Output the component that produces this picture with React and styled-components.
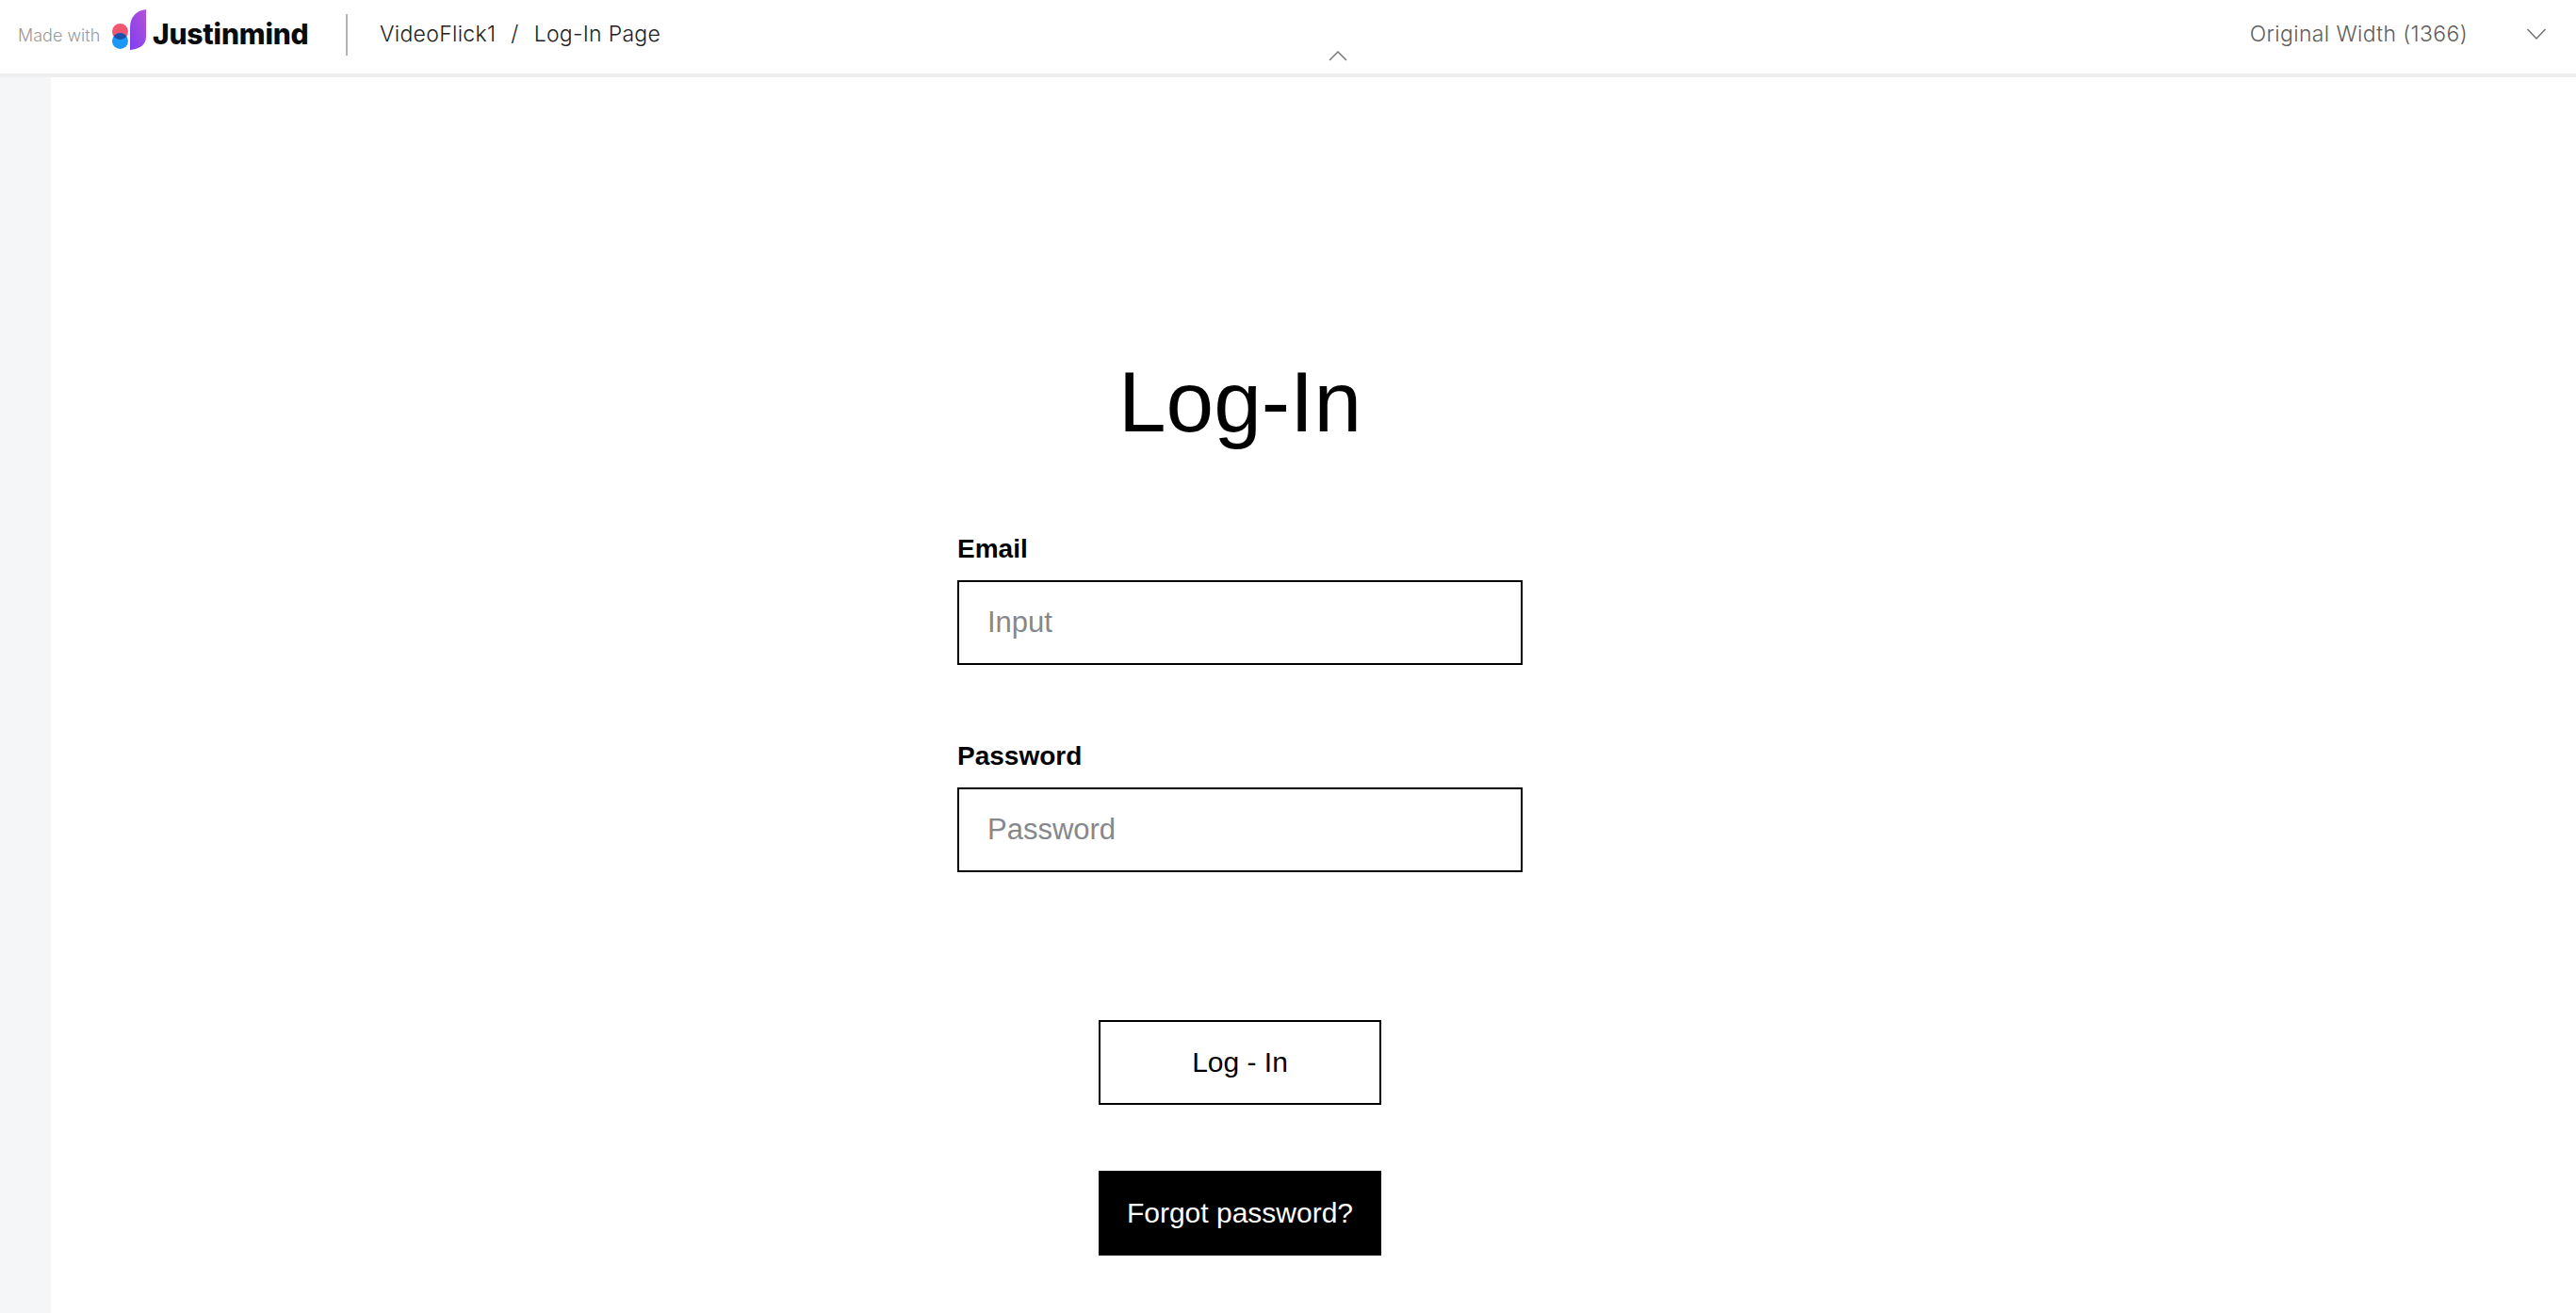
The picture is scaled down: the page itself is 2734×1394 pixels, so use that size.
import React from "react";
import styled, { createGlobalStyle } from "styled-components";

const Global = createGlobalStyle`
  html, body { margin: 0; padding: 0; background: #fff; }
  body { font-family: "Liberation Sans", Arial, sans-serif; overflow: hidden; }
  * { box-sizing: border-box; }
`;

const Page = styled.div`
  width: 2734px;
  height: 1394px;
  display: flex;
  flex-direction: column;
  overflow: hidden;
`;

const TopBar = styled.header`
  position: relative;
  flex: 0 0 82px;
  display: flex;
  align-items: flex-start;
  padding: 0 31px 0 19px;
  background: #fff;
  border-bottom: 4px solid #eeeeee;
  font-family: Inter, "Noto Sans", sans-serif;
`;

const MadeWith = styled.span`
  margin-top: 28px;
  width: 99px;
  font-size: 18px;
  line-height: 20px;
  font-weight: 300;
  color: #999;
  white-space: nowrap;
`;

const LogoMark = styled.svg`
  margin-top: 9px;
  width: 38px;
  height: 44px;
  flex: none;
`;

const LogoWord = styled.span`
  margin: 18px 0 0 6px;
  width: 172px;
  font-size: 30px;
  line-height: 36px;
  font-weight: 800;
  letter-spacing: -0.2px;
  color: #0b0b0b;
  white-space: nowrap;
`;

const Divider = styled.div`
  margin: 15px 34px 0 33px;
  width: 2px;
  height: 44px;
  flex: none;
  background: #b4b4b4;
`;

const Crumbs = styled.nav`
  margin-top: 21px;
  display: flex;
  gap: 16px;
  font-size: 23px;
  line-height: 30px;
  font-weight: 300;
  letter-spacing: 0.3px;
  color: #222;
  white-space: nowrap;
`;

const WidthSelect = styled.div`
  margin-left: auto;
  margin-top: 21px;
  display: flex;
  align-items: center;
  gap: 62px;
  font-size: 23px;
  line-height: 30px;
  font-weight: 300;
  letter-spacing: 0.35px;
  color: #5e5e5e;
  white-space: nowrap;
`;

const CollapseToggle = styled.svg`
  position: absolute;
  left: 1408px;
  top: 52px;
  width: 24px;
  height: 14px;
`;

const Body = styled.div`
  flex: 1;
  display: flex;
  min-height: 0;
`;

const Rail = styled.aside`
  flex: 0 0 54px;
  background: #f5f6f8;
`;

const Main = styled.main`
  flex: 1;
  background: #fff;
  padding-left: 962px;
`;

const Form = styled.form`
  width: 600px;
  display: flex;
  flex-direction: column;
  align-items: stretch;
`;

const Title = styled.h1`
  margin: 293px 0 0;
  font-size: 91px;
  line-height: 104px;
  font-weight: 400;
  color: #000;
  text-align: center;
`;

const Field = styled.label`
  display: flex;
  flex-direction: column;
  gap: 17px;
  margin-top: ${(p) => p.$top}px;
`;

const FieldLabel = styled.span`
  font-size: 28px;
  line-height: 32px;
  font-weight: 700;
  color: #000;
`;

const TextInput = styled.input`
  width: 600px;
  height: 90px;
  padding: 0 30px;
  border: 2px solid #000;
  border-radius: 0;
  outline: none;
  background: #fff;
  font-family: inherit;
  font-size: 31px;
  color: #000;
  &::placeholder { color: #85888c; opacity: 1; }
`;

const Actions = styled.div`
  margin-top: 157px;
  display: flex;
  flex-direction: column;
  align-items: center;
  gap: 70px;
`;

const ActionButton = styled.button`
  width: 300px;
  height: 90px;
  padding: 0;
  border: 2px solid #000;
  border-radius: 0;
  background: ${(p) => (p.$solid ? "#000" : "#fff")};
  color: ${(p) => (p.$solid ? "#fff" : "#000")};
  font-family: inherit;
  font-size: 30px;
`;

export default function App() {
  return (
    <Page>
      <Global />
      <TopBar>
        <MadeWith>Made with</MadeWith>
        <LogoMark viewBox="0 0 38 44" aria-hidden="true">
          <defs>
            <linearGradient id="leaf" x1="1" y1="0" x2="0" y2="1">
              <stop offset="0" stopColor="#b750d8" />
              <stop offset="1" stopColor="#7d3ff2" />
            </linearGradient>
          </defs>
          <circle cx="9.5" cy="24.5" r="8.5" fill="#f4566f" />
          <circle cx="9.5" cy="34.5" r="8.5" fill="#1b98f5" />
          <path d="M2.63 29.5a8.5 8.5 0 0 1 13.74 0a8.5 8.5 0 0 1-13.74 0z" fill="#1b4fa8" />
          <path d="M37 1v29c0 8-6 13-17 14V20C20 9 27 2 37 1z" fill="url(#leaf)" />
        </LogoMark>
        <LogoWord>Justinmind</LogoWord>
        <Divider />
        <Crumbs>
          <span>VideoFlick1</span>
          <span>/</span>
          <span>Log-In Page</span>
        </Crumbs>
        <WidthSelect>
          <span>Original Width (1366)</span>
          <svg width="22" height="14" viewBox="0 0 22 14" fill="none" stroke="#6f6f6f" strokeWidth="1.5">
            <path d="M1.5 2 11 12l9.5-10" />
          </svg>
        </WidthSelect>
        <CollapseToggle viewBox="0 0 24 14" fill="none" stroke="#777" strokeWidth="1.5">
          <path d="M3 12 12 3l9 9" />
        </CollapseToggle>
      </TopBar>
      <Body>
        <Rail />
        <Main>
          <Form onSubmit={(e) => e.preventDefault()}>
            <Title>Log-In</Title>
            <Field $top={88}>
              <FieldLabel>Email</FieldLabel>
              <TextInput placeholder="Input" />
            </Field>
            <Field $top={81}>
              <FieldLabel>Password</FieldLabel>
              <TextInput type="password" placeholder="Password" />
            </Field>
            <Actions>
              <ActionButton type="button">Log - In</ActionButton>
              <ActionButton type="button" $solid>Forgot password?</ActionButton>
            </Actions>
          </Form>
        </Main>
      </Body>
    </Page>
  );
}
